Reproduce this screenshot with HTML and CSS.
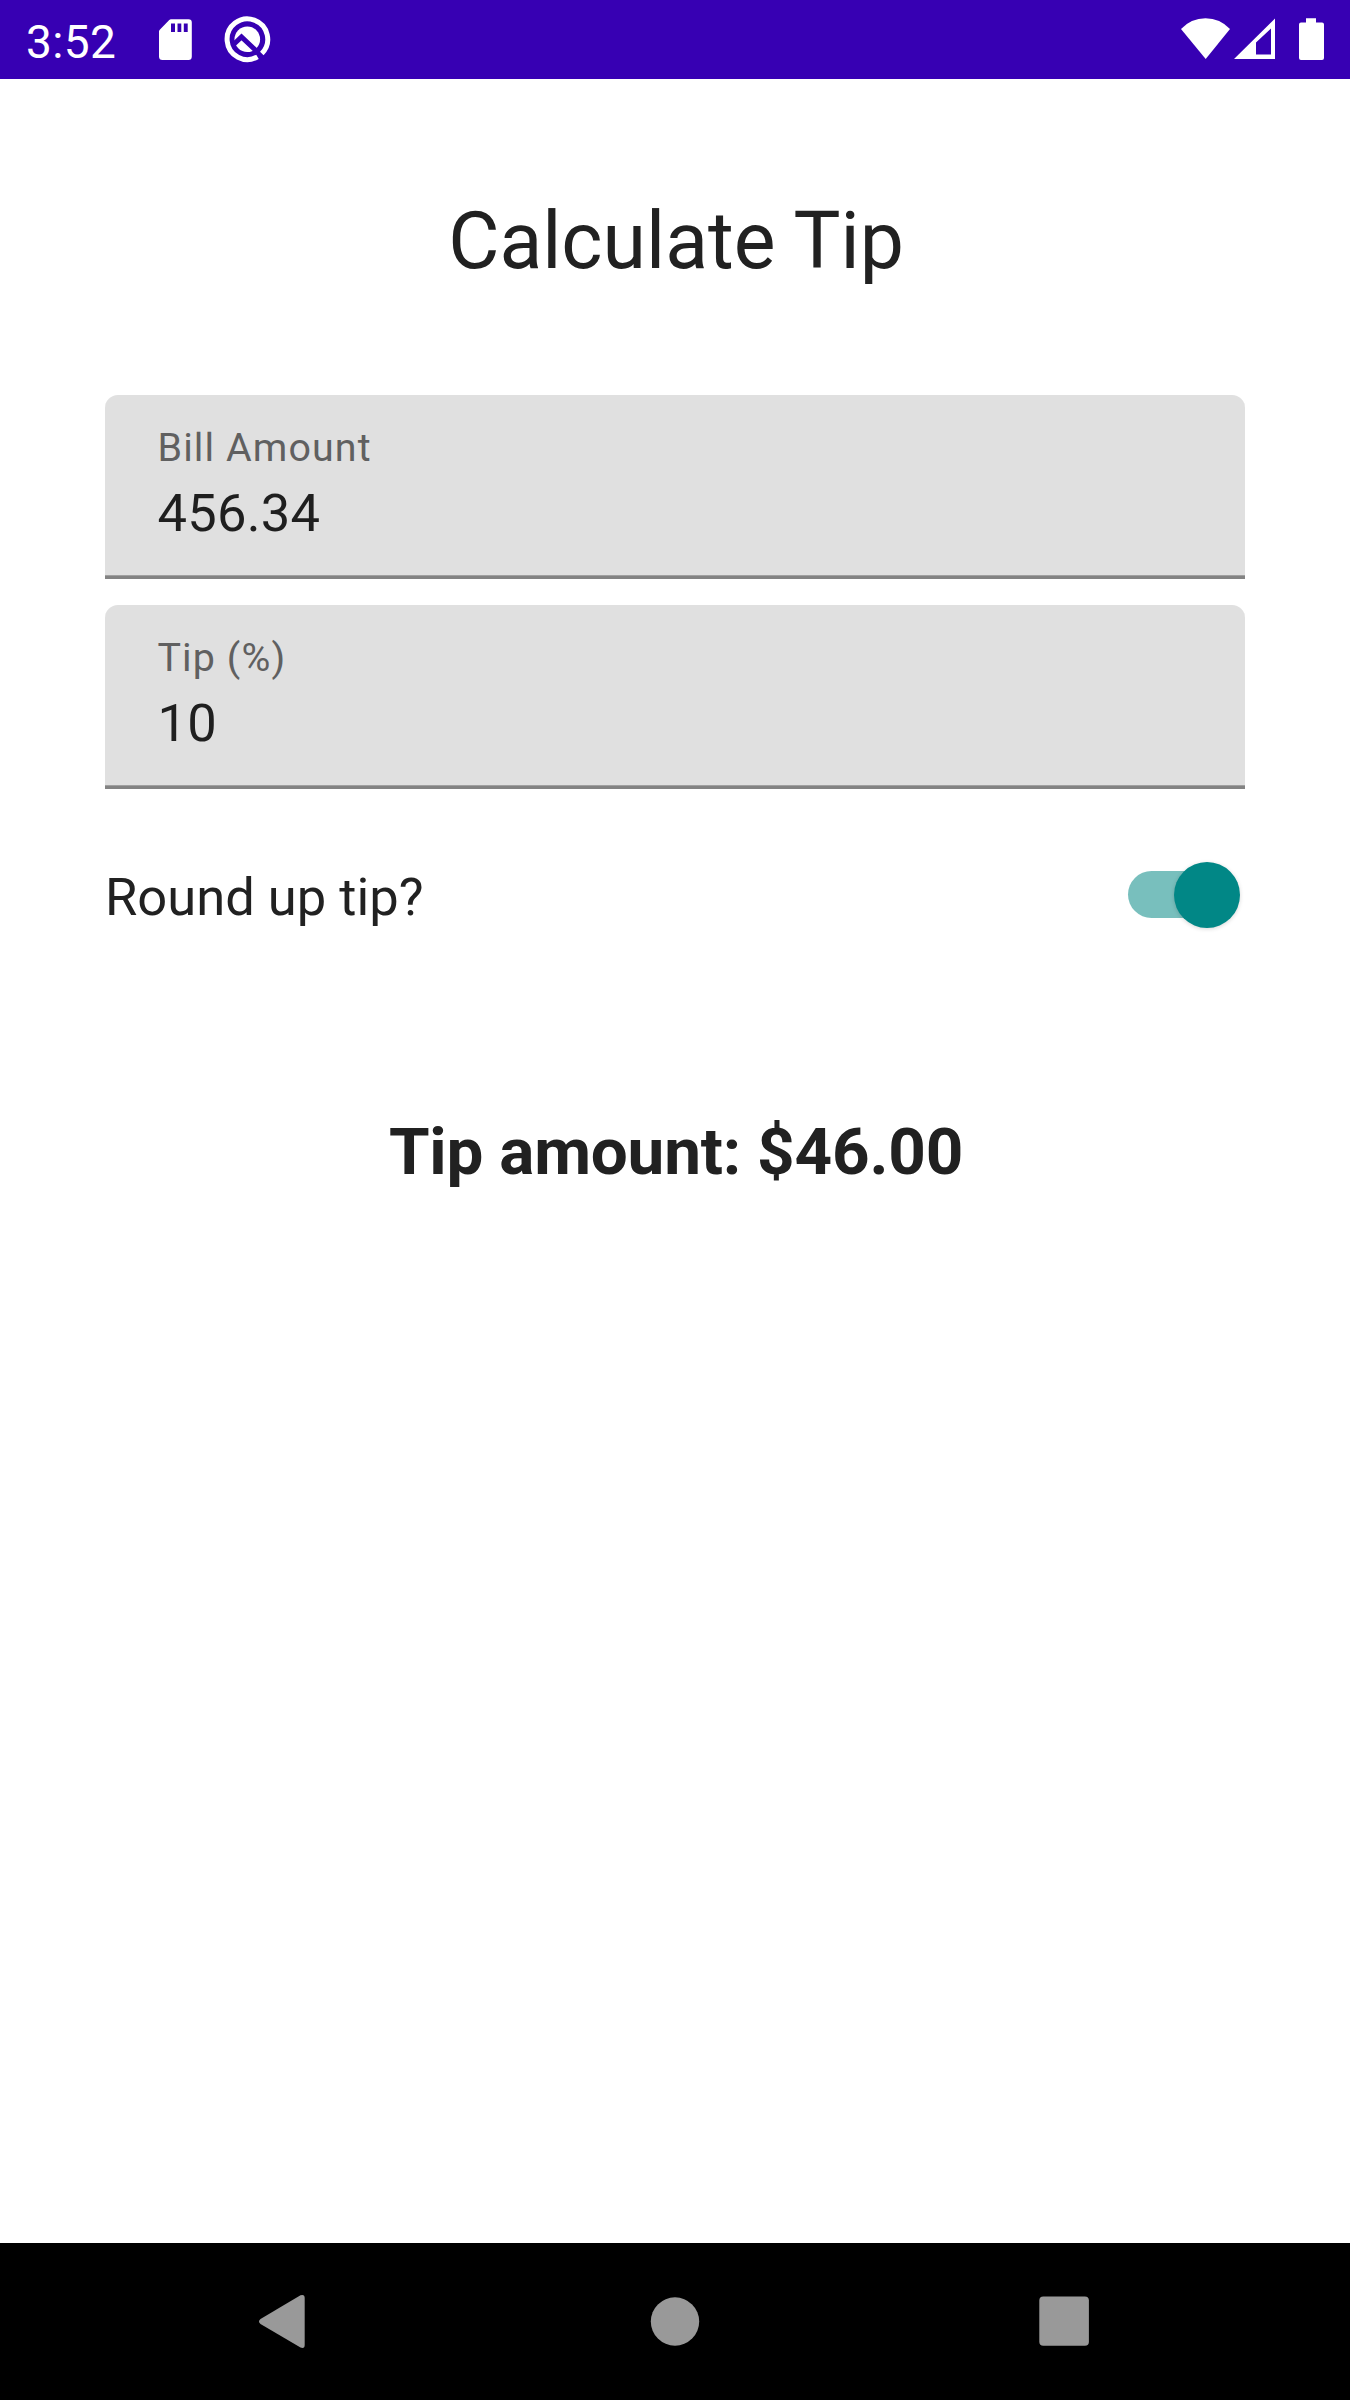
FILE: index.html
```html
<!DOCTYPE html>
<html lang="en">
<head>
<meta charset="utf-8">
<title>Calculate Tip</title>
<link rel="stylesheet" href="styles.css">
</head>
<body>
<div class="screen">
  <header class="status-bar">
    <span class="clock">3:52</span>
    <svg class="notifications" width="120" height="50" viewBox="155 14 120 50">
      <path fill="#fff" fill-rule="evenodd" d="M171 19.3H188.500Q191.800 19.300 191.800 22.500V56.500Q191.800 60 188.500 60H162.500Q159 60 159 56.500V31.500Q159 30.500 160 29.500L169 20.200Q170 19.300 171 19.300ZM171 23.500V32H175V23.500ZM177.500 23.500V32H181.300V23.500ZM183.800 23.500V32H187.700V23.500Z"/>
      <path fill="none" stroke="#fff" stroke-width="5" d="M257.500 56.800A20.300 20.300 0 1 1 261.800 53.500"/>
      <circle cx="247.300" cy="39.300" r="12.800" fill="#fff"/>
      <path fill="none" stroke="#3700b3" stroke-width="5" d="M233.500 44.500L241.500 37L258.500 53"/>
    </svg>
    <svg class="system" width="150" height="50" viewBox="1179 14 150 50">
      <g fill="#fff">
        <path d="M1181 29Q1191 18.200 1205.500 18.200T1230 29L1205.700 59Z"/>
        <path fill-rule="evenodd" d="M1275 18.500V59H1234ZM1271 28.500L1256 42.500V54.500H1271Z"/>
        <path d="M1306 18.300H1316V22.500H1322Q1324 22.500 1324 24.500V58Q1324 60 1322 60H1301Q1299 60 1299 58V24.500Q1299 22.500 1301 22.500H1306Z"/>
      </g>
    </svg>
  </header>
  <main class="content">
    <h1 class="title">Calculate Tip</h1>
    <div class="field">
      <span class="label">Bill Amount</span>
      <span class="value">456.34</span>
    </div>
    <div class="field">
      <span class="label">Tip (%)</span>
      <span class="value">10</span>
    </div>
    <div class="round-row">
      <span class="round-label">Round up tip?</span>
      <span class="switch"><span class="thumb"></span></span>
    </div>
    <p class="result">Tip amount: $46.00</p>
  </main>
  <nav class="nav-bar">
    <svg width="54" height="60" viewBox="255 2291 54 60"><path fill="#999" d="M300.500 2295.300Q304.700 2294 304.700 2298V2345Q304.700 2349 300.500 2347.500L260.500 2324Q257.500 2321.500 260.500 2319Z"/></svg>
    <svg width="54" height="60" viewBox="648 2291 54 60"><circle cx="675" cy="2321.500" r="24.200" fill="#999"/></svg>
    <svg width="54" height="60" viewBox="1037 2291 54 60"><rect x="1039.300" y="2296.600" width="49.600" height="49.200" rx="4" fill="#999"/></svg>
  </nav>
</div>
</body>
</html>
```
FILE: styles.css
```css
* { box-sizing: border-box; }
body { margin: 0; font-family: Roboto, sans-serif; color: #212121; background: #fff; }
.screen { display: flex; flex-direction: column; width: 1350px; height: 2400px; }
svg { display: block; flex: none; }

.status-bar { display: flex; align-items: flex-start; height: 79px; padding: 14px 21px 0 26px; background: #3700b3; color: #fff; }
.clock { width: 129px; font-size: 46px; line-height: 56px; letter-spacing: .4px; }
.system { margin-left: auto; }

.content { flex: 1; display: flex; flex-direction: column; padding: 116px 105px 0; }
.title { margin: 0 0 108px; padding-left: 2px; font-size: 78.75px; line-height: 92px; font-weight: 400; text-align: center; }

.field { display: flex; flex-direction: column; gap: 7px; height: 184px; margin-bottom: 26px; padding: 27px 52.5px 0; background: #e0e0e0; border-radius: 13px 13px 0 0; box-shadow: inset 0 -3px #838383, inset 0 -4px #a0a0a0; }
.label { font-size: 39.4px; line-height: 52px; letter-spacing: 1.1px; color: #606060; }
.value { font-size: 52.5px; line-height: 64px; letter-spacing: .25px; color: #1f1f1f; }

.round-row { display: flex; justify-content: space-between; align-items: flex-start; height: 70px; margin-top: 47px; padding-right: 5px; }
.round-label { font-size: 52.5px; line-height: 70px; }
.switch { display: flex; align-items: center; justify-content: flex-end; width: 112px; height: 47px; margin-top: 9px; border-radius: 24px; background: linear-gradient(90deg, #78bfbd 80px, transparent 80px); }
.thumb { flex: none; width: 66px; height: 66px; border-radius: 50%; background: #018786; box-shadow: 0 1px 4px rgba(0, 0, 0, .16); }

.result { margin: 180px 0 0; padding-left: 2px; font-size: 65.6px; line-height: 80px; letter-spacing: -.2px; font-weight: 700; text-align: center; }

.nav-bar { display: grid; grid-template-columns: 393px 389px 54px; height: 157px; padding: 48px 0 0 255px; background: #000; }
```
